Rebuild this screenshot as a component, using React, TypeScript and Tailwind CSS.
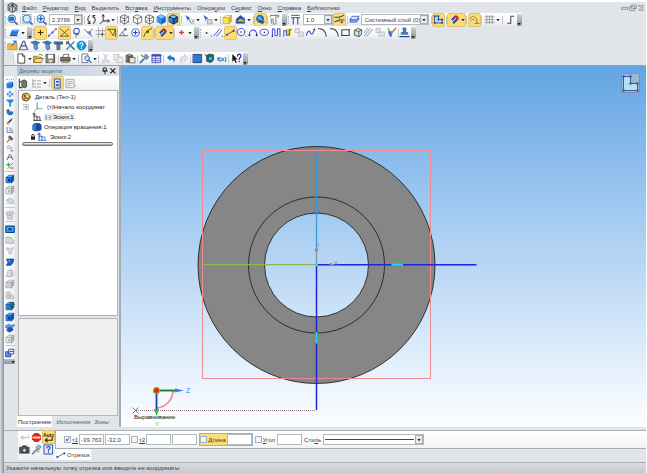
import { useState } from 'react';
import type { ReactNode } from 'react';
import clsx from 'clsx';

function Svg({ children, size = 'size-[11px]' }: { children: ReactNode; size?: string }) {
	return (
		<svg viewBox="0 0 12 12" className={clsx('shrink-0', size)} fill="none" strokeLinecap="round" strokeLinejoin="round" aria-hidden="true">
			{children}
		</svg>
	);
}

const Cube = ({ top = '#5db4f5', left = '#1c7fe0', right = '#0a48b0', stroke = '#0b3f93' }) => (
	<g stroke={stroke} strokeWidth="0.7">
		<path d="M1.5 4 4.5 1.5H10.5L8 4Z" fill={top} />
		<path d="M1.5 4H8V10.5H1.5Z" fill={left} />
		<path d="M8 4 10.5 1.5V8L8 10.5Z" fill={right} />
	</g>
);

// shaded cube seen from the corner, as on the display mode buttons
const IsoCube = ({ stroke }: { stroke: string }) => (
	<g stroke={stroke} strokeWidth="0.9">
		<path d="M6 1 10.5 3.2 6 5.4 1.5 3.2Z" fill="#7cc6fa" />
		<path d="M1.5 3.2 6 5.4V11L1.5 8.6Z" fill="#2a8ff0" />
		<path d="M6 5.4 10.5 3.2V8.6L6 11Z" fill="#1263c4" />
	</g>
);

const WireCube = ({ inner = false }) => (
	<g stroke="#555" strokeWidth="0.8">
		<path d="M6 1 10.5 3.2V8.6L6 11 1.5 8.6V3.2Z" fill="#f6f6f6" />
		<path d="M1.5 3.2 6 5.4 10.5 3.2M6 5.4V11" />
		{inner && <path d="M6 1V6.5L1.5 8.6M6 6.5 10.5 8.6" strokeWidth="0.6" />}
	</g>
);

const Lens = ({ children }: { children?: ReactNode }) => (
	<g>
		<path d="M8 8.2 11 11" stroke="#5b4fa0" strokeWidth="1.7" />
		<circle cx="5.2" cy="5.2" r="4" fill="#d5ecfb" stroke="#3479c4" strokeWidth="1.1" />
		{children}
	</g>
);

const GrayCube = () => <Cube top="#e2e2e2" left="#cfcfcf" right="#b0b0b0" stroke="#999" />;

const icons: Record<string, ReactNode> = {
	app: <g stroke="#4a4a4a"><path d="M6 1 10.8 3.5V8.8L6 11.2 1.2 8.8V3.5Z" fill="#c9ccd0" strokeWidth="1" /><path d="M1.4 3.6 6 6 10.6 3.6M6 6V11" strokeWidth="0.8" /><circle cx="6" cy="3.6" r="1.2" fill="#333" /><path d="M3 6V8M9 6V8" strokeWidth="1.2" /></g>,
	zoomFit: <Lens><path d="M3.2 3.5H7.2V7H3.2Z" fill="#3479c4" stroke="#174a86" strokeWidth="0.8" /></Lens>,
	zoomRect: <Lens><path d="M0.5 0.5H10V10H0.5Z" stroke="#6f8ea9" strokeWidth="0.7" strokeDasharray="1 1.2" /></Lens>,
	zoomIn: <Lens><path d="M5.2 2.8V7.6M2.8 5.2H7.6" stroke="#1757a6" strokeWidth="1.2" /></Lens>,
	rotate: <g stroke="#333" strokeWidth="1.1"><path d="M4 1.8C1.5 3 1.2 7.5 3.8 9.8M8 10.2C10.5 9 10.8 4.5 8.2 2.2" /><path d="M2.2 10.4 4.4 10.3 4.2 8M9.8 1.6 7.6 1.7 7.8 4" /></g>,
	axes: <g strokeWidth="1.1"><path d="M4.5 1V7.5H11" stroke="#444" /><path d="M4.5 7.5 1.2 10.5" stroke="#2e63c9" /><path d="M3.3 2.4 4.5 0.8 5.7 2.4M9.6 6.3 11.2 7.5 9.6 8.7" stroke="#444" /></g>,
	cubeWireAll: <WireCube inner />,
	cubeWire: <WireCube />,
	cubeShaded: <IsoCube stroke="#2a86e2" />,
	cubeBlue: <Cube stroke="#2a86e2" />,
	cubeEdge: <IsoCube stroke="#13294d" />,
	pointDim: <g><path d="M1.5 1 7 4.5 4.8 5.2 4.2 7.5Z" fill="#2763bd" /><path d="M4.8 5.2 8 10" stroke="#2763bd" /><path d="M8.3 5.5 10 7.6V10.5M11.4 6 10 7.6" stroke="#888" strokeWidth="0.8" /></g>,
	pointPart: <g><path d="M1.5 1 7 4.5 4.8 5.2 4.2 7.5Z" fill="#2763bd" /><path d="M6 6H11V10.8H6Z" fill="#d3d8de" stroke="#888" strokeWidth="0.7" /></g>,
	yellowCube: <Cube top="#fdf6a5" left="#f5e650" right="#d7c02b" stroke="#b5a132" />,
	paint: <g><path d="M1.5 5.5 6 1.5 10.5 5.2V10H1.5Z" fill="#1d55a5" stroke="#173a70" strokeWidth="0.6" /><path d="M3 8.5C4 4.5 8 4 10.6 8.5Z" fill="#f4a62a" /></g>,
	sphereSel: <g><circle cx="5.5" cy="5.2" r="3.8" fill="#2384e0" stroke="#15467e" strokeWidth="0.8" /><path d="M5 6.5 10.8 8.2 8.5 10.8 3.5 9Z" fill="#1e58a8" /><path d="M3.5 3.5 7 6" stroke="#bfe4ff" /></g>,
	frameGray: <path d="M1.5 3.2V1.5H10.5V3.2H7.5V10.8H4.5V5.5H2.5V10" stroke="#8a8a8a" strokeWidth="1.1" />,
	step: <g strokeWidth="1.1" stroke="#2d3cc9"><path d="M3.5 4V11M8.5 4V11M1.5 4H5.5M6.5 4H10.5" /><path d="M2 1.5H10" stroke="#555" strokeDasharray="1.2 1.4" /></g>,
	snapLines: <g strokeWidth="1.1"><path d="M1 3.5H6L10.5 1.5M1 8.5 6 6.5H11" stroke="#3b4458" /><path d="M6 3V8" stroke="#a8752a" /><circle cx="8.5" cy="9" r="1.2" fill="#3b4458" /></g>,
	layer: <g stroke="#2d4fd0" strokeWidth="0.9"><path d="M1 8.5 3.5 5H11L8.5 8.5Z" fill="#8cacf4" /><path d="M1 6 3.5 2.5H11L8.5 6Z" fill="#dce6ff" /></g>,
	sketch: <g stroke="#26419a" strokeWidth="0.9"><path d="M2 2.3H6V6H10V9.8H2Z" fill="#b5dbe3" /><path d="M1.3 1.5H2.7V2.9H1.3ZM5.3 1.5H6.7V2.9H5.3ZM9.3 5.3H10.7V6.7H9.3ZM1.3 9.2H2.7V10.6H1.3ZM9.3 9.2H10.7V10.6H9.3ZM5.3 5.3H6.7V6.7H5.3Z" fill="#26419a" strokeWidth="0.3" /></g>,
	magnet: <g strokeLinecap="butt"><path d="M2 8 6.2 3.6C8 2 10.3 4.2 8.6 6L4.6 10.2" stroke="#1d4dc4" strokeWidth="2.3" /><path d="M6.2 3.6C8 2 10.3 4.2 8.6 6" stroke="#e32919" strokeWidth="2.3" /><path d="M2 8 3.2 6.8" stroke="#fff" strokeWidth="2.3" /></g>,
	param: <g stroke="#8d7a55" strokeWidth="1"><path d="M1.5 5C2.5 1.5 6 1.5 7 5M2 7.5C3.5 5 5 5.5 5.5 7M8.5 5.5V10M6.5 10.3H11" /></g>,
	grid: <path d="M1 3H11M1 6H11M1 9H11M3 1.5V10.5M6 1.5V10.5M9 1.5V10.5" stroke="#888" strokeWidth="0.8" />,
	ortho: <path d="M3 10H6.3V2.5H9.5" stroke="#444" strokeWidth="1.1" />,
	sheet: <g><path d="M1 8.5 3.5 3H11L9 8.5Z" fill="#1d75d8" /><path d="M1 8.5H9V10H1Z" fill="#0f4eaa" /><path d="M4.5 4.2H9" stroke="#8fcbff" /></g>,
	plus: <g><path d="M6 3.5V8.5M3.5 6H8.5" stroke="#3a2c12" strokeWidth="1.2" /></g>,
	mid: <g><path d="M1.5 10 10 2" stroke="#555" strokeWidth="0.9" /><path d="M5 5H7V7H5Z" fill="#2d49d2" /><circle cx="2" cy="9.5" r="1" fill="#555" /><circle cx="9.8" cy="2.3" r="1" fill="#555" /></g>,
	cross: <g><path d="M1.5 2 10.5 10M1.5 10 10.5 2M1.5 10H10" stroke="#5a5022" strokeWidth="0.9" /></g>,
	tangent: <g><circle cx="6" cy="4.3" r="3" stroke="#2d49d2" strokeWidth="1.1" /><path d="M3 7 8.5 8.5M5.5 7.5V11" stroke="#555" strokeWidth="0.9" /></g>,
	normal: <g stroke="#666" strokeWidth="1"><path d="M1.5 2.5 6 7 10.5 2M6 7 10 10" /><path d="M5 5.5H8V8" stroke="#2d49d2" /></g>,
	gridSnap: <g><path d="M1 4H11M1 8H11M4 1V11M8 1V11" stroke="#777" strokeWidth="0.8" strokeDasharray="1.2 1" /><circle cx="8" cy="8" r="1.1" fill="#333" /></g>,
	align: <g><path d="M1.5 2.5H10.5V10.5" stroke="#54491f" strokeWidth="1" strokeDasharray="1.5 0.8" /><path d="M3.5 3 8 9.5 10 3" stroke="#54491f" strokeWidth="0.9" /></g>,
	angle: <g stroke="#555" strokeWidth="0.9"><path d="M1.5 9.5H10.5M1.5 9.5 7.5 2.5" /><path d="M6.5 9.5C6.5 7.5 6 6.5 4.8 5.8" stroke="#2d49d2" /><circle cx="8" cy="2.5" r="0.9" fill="#555" /></g>,
	center: <g><circle cx="6" cy="6" r="4.2" stroke="#3a63d6" strokeWidth="1" /><path d="M6 4V8M4 6H8" stroke="#2b3fae" strokeWidth="1.1" /></g>,
	onCurve: <g stroke="#54491f"><path d="M2 10.5C3 6 6 3 10.5 1.8" strokeWidth="1" /><circle cx="6" cy="5.2" r="1.1" fill="#54491f" /></g>,
	redPoint: <path d="M6 4V8M4 6H8" stroke="#e33224" strokeWidth="1.4" />,
	dot: <g><circle cx="5" cy="6.5" r="1" fill="#333" /><path d="M9.5 9.5H11V11Z" fill="#333" /></g>,
	parallel: <g><path d="M1 9.5 7 2.5M4 10 9.5 3.5" stroke="#3a46d8" strokeWidth="1" /><path d="M9.5 9.5H11V11Z" fill="#333" /></g>,
	segment: <g><path d="M2 8.5 9.5 4" stroke="#5c5420" strokeWidth="1" /><circle cx="2" cy="8.5" r="1.2" fill="#2d49d2" /><circle cx="9.5" cy="4" r="1.2" fill="#2d49d2" /></g>,
	circle: <g><circle cx="5.5" cy="5.5" r="4" stroke="#3a46d8" strokeWidth="1" /><circle cx="5.5" cy="5.5" r="0.9" fill="#333" /><path d="M9.8 9.5H11.2V11Z" fill="#333" /></g>,
	arc: <g><path d="M1.5 9C1.5 1.5 9.5 1.5 9.5 9" stroke="#3a46d8" strokeWidth="1.1" /><circle cx="1.6" cy="9" r="1" fill="#222" /><circle cx="9.4" cy="9" r="1" fill="#222" /></g>,
	ellipse: <g><ellipse cx="5.8" cy="5.8" rx="4.6" ry="3.4" stroke="#3a46d8" strokeWidth="1" /><circle cx="5.8" cy="5.8" r="0.9" fill="#333" /></g>,
	polyline: <g><path d="M1.5 10V3C1.5 1.5 4.2 1.5 4.2 3V8.5C4.2 10 7 10 7 8.5V2H9.8V10" stroke="#3a46d8" strokeWidth="1.1" /><circle cx="1.5" cy="10" r="0.8" fill="#222" /></g>,
	spline: <g><path d="M4 1.5H10V9H4Z" fill="#f2e14a" /><path d="M2 10V4H5V9H8V3H10.3" stroke="#2f3aa8" strokeWidth="1" /></g>,
	copyGray: <g stroke="#bcbcbc" strokeWidth="0.9" fill="#e4e4e4"><path d="M1.5 1.5H6V6H1.5Z" /><path d="M5 5.5H10.5V10H5Z" /></g>,
	curve: <g><path d="M1.5 9C3 3 5 4 6 6.5 7.5 9 9 7 10.3 2.5" stroke="#3a46d8" strokeWidth="1.2" /><circle cx="10.3" cy="2.5" r="1" fill="#333" /></g>,
	fillet: <path d="M1.5 1.8H3.5C7.5 2.5 9.5 5 10 10" stroke="#333" strokeWidth="1.1" />,
	rect: <g><path d="M2 3H10V9.2H2Z" stroke="#3b4372" strokeWidth="1.2" /><circle cx="2" cy="9.2" r="0.9" fill="#2d49d2" /><circle cx="10" cy="3" r="0.9" fill="#2d49d2" /></g>,
	project: <g><path d="M3 3.5 6 1.5 10.5 3V8L7.5 10.5 3 9Z" fill="#cfe6cf" stroke="#2b4e46" strokeWidth="0.9" /><path d="M3 3.5 7.5 5V10.5M7.5 5 10.5 3" stroke="#2b4e46" strokeWidth="0.8" /></g>,
	hatch: <path d="M1.5 9.5 8 1.5M4 10 10.5 2.5M1.5 6 5 1.5" stroke="#7079c7" strokeWidth="0.9" />,
	brush: <g><path d="M2 4.5H7.5L6 10.5H4Z" fill="#3a77d8" /><path d="M6.2 6.5 10.5 1.5" stroke="#c8892a" strokeWidth="1.7" /><path d="M2.2 1.5 4 4.5" stroke="#58a93b" strokeWidth="1.2" /></g>,
	copyProps: <g><path d="M1.5 10.5 5.5 6.5" stroke="#4a78c8" strokeWidth="2" /><path d="M4.8 3.8 8.2 7.3 10.8 4 8 1.3Z" fill="#7d93c4" stroke="#40507a" strokeWidth="0.6" /><path d="M2.5 2 4 4" stroke="#58a93b" strokeWidth="1.4" /></g>,
	stamp: <g><path d="M4.5 1H7.5V6H9.5V8H2.5V6H4.5Z" fill="#3b7fd4" stroke="#1c4a8d" strokeWidth="0.6" /><path d="M1 10.5H11" stroke="#1c4a8d" strokeWidth="1.3" /></g>,
	folderUp: <g><path d="M1 4H5L6 5H11V10.5H1Z" fill="#f2b348" stroke="#b77914" strokeWidth="0.6" /><path d="M5 6.5 9.5 1.5M7 1.2H10V4" stroke="#2f7ed0" strokeWidth="1.3" /></g>,
	letterA: <g><path d="M2 9.5 5.5 1.5H7L10 9.5M3.5 6.5H8.5" stroke="#3f5c7a" strokeWidth="1.3" /><path d="M1 10.5H11" stroke="#c04a3a" /></g>,
	bolt: <g><path d="M1 2.5 6 1 10.5 3 6.5 5Z" fill="#2a80b8" stroke="#1d3f63" strokeWidth="0.6" /><path d="M4.5 4.5 8 4.8 8.5 9.5 6 11 4.5 9Z" fill="#5d9cc8" stroke="#1d3f63" strokeWidth="0.6" /></g>,
	screw: <g><path d="M1.5 2H10.5V4.5H1.5Z" fill="#2a80b8" stroke="#1d3f63" strokeWidth="0.6" /><path d="M4.5 4.5H7.5V10.5H4.5Z" fill="#66788a" stroke="#1d3f63" strokeWidth="0.6" /></g>,
	tools: <g strokeWidth="1.5"><path d="M2 2 10 10" stroke="#4a5b6c" /><path d="M10 2 2 10" stroke="#2390c8" /><path d="M1.5 4 4 1.5" stroke="#4a5b6c" /></g>,
	info: <g><circle cx="6" cy="6" r="4.9" fill="#129bd4" stroke="#0d6d9b" strokeWidth="0.6" /><path d="M4.3 4.5C4.5 2.5 7.7 2.6 7.6 4.5 7.5 5.8 6 5.8 6 7.2" stroke="#fff" strokeWidth="1.1" /><circle cx="6" cy="9" r="0.7" fill="#fff" /></g>,
	newDoc: <path d="M2.5 1H7L9.5 3.5V11H2.5ZM7 1V3.5H9.5" fill="#fff" stroke="#333" strokeWidth="0.9" />,
	open: <g><path d="M1 3.5H4.5L5.5 4.5H9V10H1Z" fill="#e7b83d" stroke="#6d5613" strokeWidth="0.7" /><path d="M1 10 3.2 6H11.3L9 10Z" fill="#fbe07c" stroke="#6d5613" strokeWidth="0.7" /><path d="M6.5 2C8 0.8 9.5 1.2 10.2 2.8" stroke="#2f8a36" /></g>,
	save: <g><path d="M1.5 1.5H10.5V10.5H1.5Z" fill="#8a8560" stroke="#333" strokeWidth="0.8" /><path d="M3.3 1.8H8.7V6H3.3Z" fill="#fff" /><path d="M4 7.5H8V10.3H4Z" fill="#d4d8c8" /></g>,
	print: <g><path d="M3 4.5 4 1.5H9.5L9 4.5" fill="#fff" stroke="#444" strokeWidth="0.8" /><path d="M1 4.8H11V8.8H1Z" fill="#77725f" stroke="#333" strokeWidth="0.7" /><path d="M2.5 8.8H9.5V10.5H2.5Z" fill="#e5c35b" stroke="#444" strokeWidth="0.5" /></g>,
	preview: <g><path d="M1.5 1H7.5V10.5H1.5Z" fill="#fff" stroke="#555" strokeWidth="0.8" /><circle cx="6.7" cy="5.7" r="2.6" fill="#cfe5f8" stroke="#3868a8" /><path d="M8.5 7.8 11 10.5" stroke="#3868a8" strokeWidth="1.4" /></g>,
	cut: <g stroke="#b9bcc0" strokeWidth="1"><path d="M4 1 7.5 8M8 1 4.5 8" /><circle cx="3.7" cy="9.3" r="1.3" /><circle cx="8.3" cy="9.3" r="1.3" /></g>,
	copy: <g fill="#eceef0" stroke="#b0b4b8" strokeWidth="0.8"><path d="M1.5 1.5H6.5V7.5H1.5Z" /><path d="M5 4.5H10.5V10.5H5Z" /></g>,
	paste: <g><path d="M1.5 2.5H8.5V10H1.5Z" fill="#7d6238" stroke="#3f321d" strokeWidth="0.7" /><path d="M3.5 1.2H6.5V3.3H3.5Z" fill="#bbb" stroke="#444" strokeWidth="0.5" /><path d="M5 5H11V10.8H5Z" fill="#e6e9ee" stroke="#444" strokeWidth="0.7" /></g>,
	props: <g><path d="M1.5 1.5H10.5V10.5H1.5Z" fill="#dfe3fa" stroke="#3c48a8" strokeWidth="0.9" /><path d="M1.5 2.8H10.5" stroke="#3c48a8" strokeWidth="2" /><path d="M1.5 6H10.5M1.5 8.2H10.5M5 3V10.5" stroke="#3c48a8" strokeWidth="0.7" /></g>,
	undo: <path d="M1 5 5 1.5V3.8C9.5 3.5 11.5 7 8 10.8 8.8 8 8 6.6 5 6.7V8.8Z" fill="#1f6fd6" />,
	redo: <path d="M11 5 7 1.5V3.8C2.5 3.5 0.5 7 4 10.8 3.2 8 4 6.6 7 6.7V8.8Z" fill="#e2e5e8" stroke="#b4b8bc" strokeWidth="0.6" />,
	book: <g><path d="M1.5 1.5H10.5V10.5H1.5Z" fill="#1d63ce" stroke="#173d84" strokeWidth="0.9" /><path d="M2.5 3.5H9.5M2.5 6H9.5M2.5 8.5H9.5" stroke="#55a5f0" strokeWidth="0.8" /></g>,
	library: <g><path d="M3 2.5 6 1 10.5 2V7.5L7.5 10.5 3 9Z" fill="#16686e" stroke="#103c53" strokeWidth="0.7" /><path d="M5.5 4.5H8.5V7.5H5.5Z" fill="#49c2b8" /><path d="M1 1.5 3.5 4" stroke="#222" /></g>,
	whatIs: <g><path d="M1.5 1V9.5L3.5 7.6 5 11 6.2 10.4 4.8 7.2H7.2Z" fill="#111" /><path d="M7 3.3C7 0.6 11 0.8 10.9 3.2 10.8 5 9 5 9 7" stroke="#2b35ad" strokeWidth="1.4" /><circle cx="9" cy="9.3" r="0.9" fill="#2b35ad" /></g>,
	surf: <g fill="#3586de"><path d="M6 1 8 3.3 6 5.5 4 3.3ZM2.8 4 5 6.2 2.8 8.5 0.8 6.2ZM9.2 4 11.2 6.2 9.2 8.5 7 6.2ZM6 7 8 9 6 11.3 4 9Z" /></g>,
	funnel: <g><path d="M1 1.5 5.5 6.5V11H7V6.5L11 1.5Z" fill="#2288da" stroke="#2288da" /><path d="M8 1.5 10 4" stroke="#d44" strokeWidth="1.4" /></g>,
	cyl: <g><path d="M1.5 4C2 1 5 1.5 5 4.5 6 7 9 4 10.5 6.5 11 10 8 11 5.5 10.5 2 10 0.8 7 1.5 4Z" fill="#2271c2" stroke="#184b83" strokeWidth="0.6" /></g>,
	edge: <g><path d="M2 10 10 2" stroke="#666" /><path d="M4.5 7.5 8 4" stroke="#333" strokeWidth="2.2" /><path d="M2 8V10.3H4.4" stroke="#555" /></g>,
	dims: <g><path d="M1.5 2V9.5H10.5" stroke="#3b4fb5" strokeWidth="1.1" /><path d="M4.5 3H7.5L5 7H8M9 4V9" stroke="#777" strokeWidth="0.9" /></g>,
	hammer: <g><path d="M2 10.5 6 5.5" stroke="#a86d26" strokeWidth="1.8" /><path d="M3.5 3 6 1.2 10.5 5.5 8.5 8Z" fill="#6b5640" stroke="#3e3226" strokeWidth="0.6" /></g>,
	compass: <path d="M1.5 10 5.2 2.5H6.8L10.5 10M3 7.5C5 5.8 7 5.8 9 7.5" stroke="#4b4f55" strokeWidth="1.2" />,
	plusMinus: <g strokeWidth="1.5"><path d="M3.5 1.5V6.5M1 4H6" stroke="#2b9a3d" /><path d="M10.5 1.5 2 10.5" stroke="#444" strokeWidth="0.8" /><path d="M6.5 9H11" stroke="#df3324" /></g>,
	extrude: <g><Cube /><path d="M3.5 6H6.5V9H3.5Z" fill="#0c3a92" /></g>,
	cutOut: <g><Cube top="#e2e2e2" left="#eee" right="#b5b5b5" stroke="#8d8d8d" /><path d="M3.5 5.8H6.5V9H3.5Z" fill="#bababa" /></g>,
	shapesGray: <g fill="#d2d2d2" stroke="#aaa" strokeWidth="0.8"><circle cx="4" cy="4.5" r="2.7" /><circle cx="8" cy="3.5" r="2.3" /><path d="M3.5 6.5H9V11H3.5Z" /></g>,
	fixGray: <g stroke="#aaa" strokeWidth="0.8" fill="#d6d6d6"><path d="M1.5 5 6 2.5 10.5 5V9H6L4 6.5Z" /><path d="M1.5 8.5H5" /></g>,
	frameBlue: <g><path d="M1 2.5H11V10H1Z" fill="#2db8e8" stroke="#0d3f9c" strokeWidth="1.5" /><path d="M4.2 4.8H7.8V7.8H4.2Z" fill="#0e3b8d" /></g>,
	roundGray: <path d="M1.5 2.5H5C9 3 10.5 6 10.5 10H1.5Z" fill="#d6d6d6" stroke="#aaa" strokeWidth="0.9" />,
	holeGray: <path d="M1.5 2.5H4.5L5 9H7.2L7.7 2.5H10.5M1.5 4.5H3.5" stroke="#aaa" strokeWidth="1.1" />,
	sheetBlue: <g><path d="M2 2.5H10.5L9.5 7 7 10H1.5L3.5 7Z" fill="#1a5fd0" stroke="#0c3382" strokeWidth="0.8" /><path d="M5 3.5V6" stroke="#7fc2ff" /></g>,
	loftGray: <path d="M1.5 10 4 2.5H8L10.5 8.5 8 10ZM8 2.5 7.5 10" fill="#dedede" stroke="#aaa" strokeWidth="0.9" />,
	boxGray: <GrayCube />,
	ribGray: <g fill="#d2d2d2" stroke="#aaa" strokeWidth="0.8"><path d="M1.5 3 5 2 10.5 8V10.5H1.5Z" /><circle cx="5" cy="7.3" r="1.7" /></g>,
	partGreen: <g><Cube /><circle cx="8.3" cy="4" r="2.6" fill="#2d7d58" stroke="#1c3d4d" strokeWidth="0.7" /></g>,
	mirror: <g><path d="M1 3 5 1.5 8 3 11 1.5V4L7 6 1 5.5Z" fill="#5f9cf2" stroke="#234ea5" strokeWidth="0.6" /><path d="M3 6 8 5.5 10 8 6 11 2.5 9.5Z" fill="#1d54c4" stroke="#14377f" strokeWidth="0.6" /></g>,
	arrayBlue: <g><path d="M1 4.5H7V10.5H1Z" fill="#5a8de6" stroke="#1d3e94" /><path d="M5 1.5H10.5V7H5Z" fill="#e9f0ff" stroke="#1d3e94" /><path d="M6.5 4.2H9" stroke="#333" /></g>,
	enter: <path d="M10.5 4V6H2M4.5 4.2 2 6 4.5 7.8" stroke="#c0c3c6" strokeWidth="1.2" />,
	camera: <g><path d="M1 3.5H3.5L4 2H8L8.5 3.5H11V10H1Z" fill="#4e555b" stroke="#22272b" strokeWidth="0.7" /><circle cx="6" cy="6.8" r="2.2" fill="#cfd9df" stroke="#22272b" strokeWidth="0.8" /></g>,
	torch: <g><path d="M2 10.5 7.2 5" stroke="#7a86b8" strokeWidth="2.2" /><path d="M5.5 3.5 8.5 6.8 11 2.8 9 1Z" fill="#82b7f0" stroke="#476" strokeWidth="0.6" /><path d="M6 7.5 8.5 8.5" stroke="#c5ad3a" strokeWidth="1.6" /></g>,
	helpDoc: <g><path d="M1.5 1H10.5V11H1.5Z" fill="#dfe9fb" stroke="#25479a" strokeWidth="1" /><path d="M4.2 4.3C4.2 2.3 7.8 2.4 7.7 4.4 7.6 5.7 6 5.7 6 7" stroke="#1f3a9a" strokeWidth="1.1" /><circle cx="6" cy="9" r="0.7" fill="#1f3a9a" /></g>,
	treeRoot: <g stroke="#3a3a3a"><path d="M2.5 1V10.5H5M2.5 4H5" strokeWidth="1.1" /><path d="M5.5 3 8 2 10.5 3.5V9.5L8 10.8 5.5 9.5Z" fill="#6d7a5a" strokeWidth="0.8" /></g>,
	treeGray: <g stroke="#a0a4a8" strokeWidth="1"><path d="M2 1.5V10H5M2 3H5M2 6.5H5M7 3H10.5M7 6.5H10.5M7 10H10.5" /></g>,
	treeBlue: <g><path d="M3 1H9V11H3Z" fill="#cfe1fb" stroke="#29509f" strokeWidth="1" /><path d="M4.5 3.2H7.5V5H4.5ZM4.5 6.8H7.5V8.6H4.5Z" fill="#29509f" /></g>,
	treeList: <g stroke="#a0a4a8" strokeWidth="0.9"><path d="M1.5 1.5H10V10.5H1.5Z" fill="#f0f0f0" /><path d="M3 4H8M3 6H8M3 8H6M10 7 11.3 9" /></g>,
	gear: <g><circle cx="6" cy="6" r="4.8" fill="#e4b64a" stroke="#5e471b" strokeWidth="1.1" /><circle cx="4.5" cy="4.8" r="1.2" fill="#5e471b" /><circle cx="7.8" cy="5.2" r="1.1" fill="#fff2c4" /><path d="M3.5 8.3 6.5 7 9 8.5" stroke="#5e471b" strokeWidth="1.2" /></g>,
	origin: <g strokeWidth="1"><path d="M5 1V8" stroke="#3b5fd8" /><path d="M5 8H11" stroke="#3bb067" /><path d="M5 8 1.5 11" stroke="#e0655a" /></g>,
	sketchDark: <g stroke="#3c3c3c" strokeWidth="1.1"><path d="M2.5 1V10.5M1 2.5H4M2.5 5H6V10.5M2.5 10H11M6 6H9.5V10" /></g>,
	sketchBlue: <g strokeWidth="1.1"><path d="M2.5 1V10.5M1 2.5H4M2.5 5H6V10.5" stroke="#2f49a8" /><path d="M2.5 10H11M6 6H9.5V10" stroke="#3a92d8" /></g>,
	revolve: <g stroke="#113c7a" strokeWidth="0.7"><path d="M1 3.5C2 1.5 5 1 6 2V10.5C4 11 2 10.5 1 9.5Z" fill="#2580d8" /><path d="M6 2C8 1 10 2 11 3.5V9C9.5 10.5 8 10.5 6 10.5Z" fill="#0f4fa2" /></g>,
};

function Tool({ icon, label, on = false, menu = false }: { icon: string; label: string; on?: boolean; menu?: boolean }) {
	const [active, setActive] = useState(on);
	return (
		<button
			type="button"
			title={label}
			aria-label={label}
			onClick={() => on && setActive(!active)}
			className={clsx(
				'flex h-3 shrink-0 items-center justify-center gap-px rounded-[1px]',
				menu ? 'w-[17px]' : 'w-[11px]',
				active ? 'bg-[#fddc74] outline outline-[#e3c271]' : 'hover:bg-[#fdeeb5]'
			)}
		>
			<Svg>{icons[icon]}</Svg>
			{menu && <Caret />}
		</button>
	);
}

const Caret = () => (
	<svg viewBox="0 0 4 4" className="size-1 shrink-0" aria-hidden="true">
		<path d="M0.3 1H3.7L2 3.2Z" fill="#222" />
	</svg>
);

const Sep = () => <span className="h-2 w-px shrink-0 bg-[#c3c8cd]" />;

function Bar({ label, className, children }: { label: string; className: string; children: ReactNode }) {
	return (
		<div
			role="toolbar"
			aria-label={label}
			className={clsx('flex h-[13px] shrink-0 items-center justify-between rounded-xs bg-linear-to-b from-white via-[#f8f9fa] to-[#e6e9ed]', className)}
		>
			<span className="h-2 w-0 shrink-0 border-l border-dotted border-[#a9afb5]" />
			{children}
			<span className="flex h-3 w-[5px] shrink-0 items-end justify-center rounded-r-xs bg-linear-to-b from-[#cdd1d5] to-[#8b9197]">
				<Caret />
			</span>
		</div>
	);
}

function Combo({ label, value, className }: { label: string; value: string; className: string }) {
	return (
		<span className={clsx('flex h-[11px] shrink-0 items-center border border-[#b4b9be] bg-white', className)}>
			<select aria-label={label} className="h-full min-w-0 flex-1 appearance-none bg-transparent pl-[2px] outline-none">
				<option>{value}</option>
			</select>
			<span className="flex h-full w-2 shrink-0 items-center justify-center border border-[#a7acb1] bg-[#e8eaec]">
				<Caret />
			</span>
		</span>
	);
}

const menus = ['Файл', 'Редактор', 'Вид', 'Выделить', 'Вставка', 'Инструменты', 'Операции', 'Сервис', 'Окно', 'Справка', 'Библиотеки'];
// position of the underlined access letter in each menu title
const accessKeys = [0, 0, 0, 2, 3, 0, 5, 1, 0, 0, 0];

const snaps = [
	['plus', 'Ближайшая точка', true], ['mid', 'Середина'], ['cross', 'Пересечение', true], ['tangent', 'Касание'],
	['normal', 'Нормаль'], ['gridSnap', 'По сетке'], ['align', 'Выравнивание', true], ['angle', 'Угловая привязка'],
	['center', 'Центр'], ['onCurve', 'Точка на кривой', true],
] as [string, string, boolean?][];

const geometry = [
	['dot', 'Точка'], ['parallel', 'Вспомогательная прямая'], ['segment', 'Отрезок', true], ['circle', 'Окружность'],
	['arc', 'Дуга'], ['ellipse', 'Эллипс'], ['polyline', 'Непрерывный ввод'], ['spline', 'Линия'], ['copyGray', 'Контур'],
	['curve', 'Сплайн'], ['fillet', 'Фаска'], ['fillet', 'Скругление'], ['rect', 'Прямоугольник'],
	['project', 'Спроецировать объект'], ['hatch', 'Штриховка'], ['copyGray', 'Эквидистанта'], ['brush', 'Свойства'],
] as [string, string, boolean?][];

const panels = ['cubeBlue', 'surf', 'funnel', 'cyl', 'edge', 'dims', 'hammer', 'param', 'compass', 'plusMinus'];
const operations = [
	['extrude', 'cutOut', 'fixGray'],
	['shapesGray'],
	['frameBlue', 'roundGray', 'holeGray', 'sheetBlue', 'loftGray', 'boxGray', 'ribGray', 'partGreen', 'extrude', 'mirror', 'cutOut'],
	['arrayBlue'],
];

function MenuBar() {
	return (
		<nav className="flex h-[13px] items-center border-t-2 border-white pr-px pl-[3px]">
			<Svg>{icons.app}</Svg>
			<div className="ml-1 flex flex-1 gap-[6px]">
				{menus.map((m, i) => (
					<button key={m} type="button" className="whitespace-nowrap hover:bg-[#fdeeb5]">
						{m.slice(0, accessKeys[i])}
						<u>{m[accessKeys[i]]}</u>
						{m.slice(accessKeys[i] + 1)}
					</button>
				))}
			</div>
			<button type="button" aria-label="Свернуть"><Svg size="size-2"><path d="M1.5 5H10.5V8H1.5Z" stroke="#777" /></Svg></button>
			<button type="button" aria-label="Восстановить"><Svg size="size-2"><path d="M4 1.5H11V7H4ZM1.5 4H8.5V10H1.5Z" fill="#e1e5e9" stroke="#777" /></Svg></button>
			<button type="button" aria-label="Закрыть"><Svg size="size-2"><path d="M3 2.5H10L7.5 6 10 9.5H3L5.5 6Z" stroke="#777" /></Svg></button>
		</nav>
	);
}

function Toolbars() {
	return (
		<div className="border-b border-[#9aa2a9] pl-px">
			<div className="flex gap-px">
				<Bar label="Вид" className="w-[282px]">
					<Tool icon="zoomFit" label="Показать все" />
					<Sep />
					<Tool icon="zoomRect" label="Увеличить рамкой" />
					<Sep />
					<Tool icon="zoomIn" label="Масштаб" />
					<Combo label="Масштаб" value="2.3766" className="w-[34px]" />
					<Sep />
					<Tool icon="rotate" label="Повернуть" />
					<Tool icon="axes" label="Ориентация" menu />
					<Sep />
					<Tool icon="cubeWireAll" label="Каркас" />
					<Tool icon="cubeWire" label="Без невидимых линий" />
					<Tool icon="cubeWireAll" label="Невидимые линии тонкие" />
					<Tool icon="cubeShaded" label="Полутоновое" />
					<Tool icon="cubeEdge" label="Полутоновое с каркасом" on />
					<Sep />
					<Tool icon="pointDim" label="Размеры" menu />
					<Tool icon="pointPart" label="Скрыть" menu />
					<Sep />
					<Tool icon="yellowCube" label="Прозрачность" />
					<Tool icon="paint" label="Цвет" menu />
					<Sep />
					<Tool icon="sphereSel" label="Упрощенное" on />
					<Sep />
					<Tool icon="frameGray" label="Разнести" />
				</Bar>
				<Bar label="Текущее состояние" className="w-[234px]">
					<Tool icon="step" label="Шаг курсора" />
					<Combo label="Шаг курсора" value="1.0" className="w-[30px]" />
					<Tool icon="snapLines" label="Шаг" on />
					<Sep />
					<Tool icon="layer" label="Слои" />
					<Combo label="Слой" value="Системный слой (0)" className="w-[68px]" />
					<Sep />
					<Tool icon="sketch" label="Эскиз" on />
					<Sep />
					<Tool icon="magnet" label="Привязки" on menu />
					<Sep />
					<Tool icon="param" label="Параметрический режим" on />
					<Sep />
					<Tool icon="grid" label="Сетка" menu />
					<Sep />
					<Tool icon="ortho" label="Ортогональное черчение" />
				</Bar>
			</div>
			<div className="flex gap-px">
				<Bar label="Плоскости" className="w-[27px]">
					<Tool icon="sheet" label="Плоскость" menu />
				</Bar>
				<Bar label="Глобальные привязки" className="w-[166px]">
					{snaps.map(([icon, label, on]) => <Tool key={label} icon={icon} label={label} on={on} />)}
					<Sep />
					<Tool icon="magnet" label="Запретить привязки" on menu />
					<Sep />
					<Tool icon="redPoint" label="Локальная привязка" menu />
				</Bar>
				<Bar label="Геометрия" className="w-[216px]">
					{geometry.map(([icon, label, on]) => <Tool key={label} icon={icon} label={label} on={on} />)}
					<Sep />
					<Tool icon="stamp" label="Операция" />
				</Bar>
			</div>
			<Bar label="Библиотеки" className="w-[88px]">
				<Tool icon="folderUp" label="Открыть библиотеку" />
				<Tool icon="letterA" label="Обозначения" />
				<Tool icon="bolt" label="Болт" />
				<Tool icon="bolt" label="Гайка" />
				<Tool icon="screw" label="Винт" />
				<Tool icon="tools" label="Настройка" />
				<Tool icon="info" label="Справка" />
			</Bar>
			<div className="pl-2">
				<Bar label="Стандартная" className="w-[235px]">
					<Tool icon="newDoc" label="Создать" menu />
					<Tool icon="open" label="Открыть" />
					<Tool icon="save" label="Сохранить" />
					<Sep />
					<Tool icon="print" label="Печать" menu />
					<Sep />
					<Tool icon="preview" label="Просмотр" menu />
					<Sep />
					<Tool icon="cut" label="Вырезать" />
					<Tool icon="copy" label="Копировать" />
					<Tool icon="paste" label="Вставить" />
					<Sep />
					<Tool icon="copyProps" label="Копировать свойства" />
					<Tool icon="props" label="Свойства" />
					<Sep />
					<Tool icon="undo" label="Отменить" />
					<Tool icon="redo" label="Повторить" />
					<Sep />
					<Tool icon="book" label="Менеджер библиотек" />
					<Tool icon="library" label="Менеджер документа" />
					<button type="button" title="Переменные" className="w-[11px] font-bold text-[#2f3c9e]">f(x)</button>
					<Sep />
					<Tool icon="whatIs" label="Что это такое?" />
				</Bar>
			</div>
		</div>
	);
}

function Rail() {
	return (
		<aside className="flex w-[11px] shrink-0 flex-col pt-[10px]">
			<div className="flex flex-col items-center bg-linear-to-r from-white to-[#eceef2] pt-[3px]">
				<span className="h-0 w-2 border-t border-dotted border-[#a9afb5]" />
				{panels.map((p) => (
					<button key={p} type="button" aria-label={p} className="flex h-[9px] items-center pt-px">
						<Svg size="size-2">{icons[p]}</Svg>
					</button>
				))}
				{operations.map((group, g) => (
					<div key={g} className="mt-px flex flex-col items-center border-t border-[#c3c8cd] pt-px">
						{group.map((p, i) => (
							<button key={i} type="button" aria-label={p} className="flex h-[11px] items-center">
								<Svg size="size-[10px]">{icons[p]}</Svg>
							</button>
						))}
					</div>
				))}
				<span className="mt-px flex h-[5px] w-full items-center justify-end bg-linear-to-b from-[#b9bec3] to-[#8b9197]">
					<Caret />
				</span>
			</div>
		</aside>
	);
}

function TreePanel() {
	return (
		<section className="flex w-[104px] shrink-0 flex-col pl-[2px]">
			<header className="flex h-[10px] items-center bg-linear-to-r from-[#b9c7d6] to-[#dde4eb] px-[2px] text-[#5c6b7b]">
				<h2 className="flex-1">Дерево модели</h2>
				<button type="button" aria-label="Закрепить"><Svg size="size-2"><path d="M4 1.5H8V6H4ZM2.5 6H9.5M6 6V10.5" stroke="#222" strokeWidth="1.4" /></Svg></button>
				<button type="button" aria-label="Закрыть"><Svg size="size-2"><path d="M2.5 2.5 9 9M9 2.5 2.5 9" stroke="#222" strokeWidth="1.7" /></Svg></button>
			</header>
			<div className="flex h-[14px] items-center gap-[2px] bg-linear-to-b from-white to-[#eef0f2]">
				<Tool icon="treeRoot" label="Структура" />
				<Tool icon="treeGray" label="Состав" menu />
				<Sep />
				<Tool icon="treeBlue" label="Отображение структуры" on />
				<Tool icon="treeList" label="Дополнительное окно" />
			</div>
			<ul className="mx-px flex-7 border border-[#aeb4ba] bg-white pt-px text-[#222]">
				<li className="flex h-[10px] items-center gap-1 pl-[2px]"><Svg size="size-[10px]">{icons.gear}</Svg>Деталь (Тел-1)</li>
				<li className="flex h-[10px] items-center gap-1 pl-1">
					<button type="button" aria-label="Развернуть"><Svg size="size-[6px]"><path d="M1 1H11V11H1Z" fill="#fff" stroke="#8a9aaa" /><path d="M3.5 6H8.5M6 3.5V8.5" stroke="#345" /></Svg></button>
					<Svg size="size-[10px]">{icons.origin}</Svg>
					<span className="whitespace-nowrap">(т)Начало координат</span>
				</li>
				<li className="flex h-[10px] items-center gap-[2px] pl-[13px]"><Svg size="size-[10px]">{icons.sketchDark}</Svg><span className="bg-[#ececec] px-px">(-) Эскиз:1</span></li>
				<li className="flex h-[10px] items-center gap-[2px] pl-[13px]"><Svg size="size-[10px]">{icons.revolve}</Svg><span className="whitespace-nowrap">Операция вращения:1</span></li>
				<li className="flex h-[10px] items-center gap-px pl-[11px]">
					<Svg size="size-[6px]"><path d="M2 5H10V11.5H2Z" fill="#222" /><path d="M3.5 5V3C3.5 0 8.5 0 8.5 3V5" stroke="#222" strokeWidth="1.8" /></Svg>
					<Svg size="size-[10px]">{icons.sketchBlue}</Svg>
					<span className="pl-[2px]">Эскиз:2</span>
				</li>
				<li className="mr-1 ml-[3px] h-1 rounded-full border border-[#777] bg-linear-to-b from-white to-[#999]" />
			</ul>
			<div className="mx-px mt-[2px] flex-3 border border-[#b4b9be] bg-[#efefef]" />
			<div role="tablist" className="flex h-[11px] items-center gap-1 text-[#555f69]">
				<button type="button" role="tab" aria-selected="true" className="h-full bg-white px-px text-[#333]">Построение</button>
				<button type="button" role="tab" aria-selected="false">Исполнения</button>
				<button type="button" role="tab" aria-selected="false">Зоны</button>
			</div>
		</section>
	);
}

function Viewport() {
	return (
		<main className="flex min-h-0 flex-1 border-l-2 border-[#a3abb3] bg-linear-to-b from-[#62a5e4] to-[#fdfeff]">
			<svg viewBox="0 0 525 361" className="block h-full w-full" fill="none" role="img" aria-label="Деталь, вид сверху">
				<path fillRule="evenodd" d="M77 199a118.500 118.500 0 1 0 237 0a118.500 118.500 0 1 0 -237 0ZM143.500 199a52 52 0 1 0 104 0a52 52 0 1 0 -104 0Z" fill="#868686" />
				<g stroke="#222" strokeWidth="0.900">
					<circle cx="195.500" cy="199" r="118.500" />
					<circle cx="195.500" cy="199" r="68" />
					<circle cx="195.500" cy="199" r="52" />
				</g>
				<path d="M81.500 84.500H309.500V312.500H81.500Z" stroke="#ef8a90" />
				<path d="M195.500 85V199" stroke="#3598dc" strokeWidth="1.200" />
				<path d="M82 198.700H195" stroke="#8cba50" strokeWidth="1.200" />
				<path d="M195.500 198.700H355.500M195.500 199V344" stroke="#2422dc" strokeWidth="1.500" />
				<path d="M270.500 198.700H282M195.500 266V277.500" stroke="#18dbe4" strokeWidth="2" />
				<path d="M194 197.500H197V200.500H194Z" fill="#18dbe4" />
				<path d="M195.500 197V185M194 185 195.500 181 197 185ZM209 198.700H213M209 197.200 213 198.700 209 200.200Z" stroke="#8d8d95" strokeWidth="0.800" fill="#8d8d95" />
				<text x="195" y="181" fontSize="6" fill="#8d8d95">Y</text>
				<text x="213" y="199" fontSize="6" fill="#8d8d95">X</text>
				<path d="M15 344.500H195" stroke="#9a7777" strokeDasharray="1 1" />
				<path d="M11.500 341.500 17.500 347.500M17.500 341.500 11.500 347.500" stroke="#6d4f4f" strokeWidth="0.800" />
				<path d="M52 325C51.500 334 45 341 36 342" stroke="#ee8d8d" strokeWidth="1.800" />
				<path d="M35.500 324.500H54" stroke="#127a22" strokeWidth="1.800" />
				<path d="M54 322.500 63 324.500 54 326.500Z" fill="#2f80f0" />
				<path d="M35.500 324V343" stroke="#173fb4" strokeWidth="1.800" />
				<path d="M33 343H38L35.500 350Z" fill="#1fc43a" />
				<circle cx="35.500" cy="324.500" r="3" fill="#d8291c" stroke="#c59a1d" strokeWidth="1.200" />
				<text x="65" y="327" fontSize="7" fill="#2f80f0">Z</text>
				<text x="34" y="360" fontSize="6" fill="#1fc43a">Y</text>
				<text x="13" y="353" fontSize="6" fill="#111">Выравнивание</text>
				<path d="M500.500 7.500H518.500V26.500H500.500Z" fill="#9db7d2" stroke="#8392a3" />
				<path d="M502.500 10.500H509.500V17.500H516.500V24.500H502.500Z" fill="#b3e4ec" stroke="#3d57ad" />
				<g fill="#3d57ad">
					<circle cx="502.500" cy="10.500" r="1.300" />
					<circle cx="509.500" cy="10.500" r="1.300" />
					<circle cx="509.500" cy="17.500" r="1.300" />
					<circle cx="516.500" cy="17.500" r="1.300" />
					<circle cx="516.500" cy="24.500" r="1.300" />
					<circle cx="502.500" cy="24.500" r="1.300" />
				</g>
			</svg>
		</main>
	);
}

function Check({ label, letter, children, checked = false }: { label: string; letter: string; children?: string; checked?: boolean }) {
	const [on, setOn] = useState(checked);
	return (
		<label className="flex shrink-0 items-center gap-px" title={label}>
			<span className="grid">
				<input type="checkbox" checked={on} onChange={() => setOn(!on)} className="col-start-1 row-start-1 size-[7px] appearance-none border border-[#a9b4bf] bg-[#f3f5f7]" />
				{on && (
					<svg viewBox="0 0 7 7" className="pointer-events-none col-start-1 row-start-1 size-[7px]" fill="none">
						<path d="M2 3 3 5 5 1.500" stroke="#4454a4" />
					</svg>
				)}
			</span>
			<span><u>{letter}</u>{children}</span>
		</label>
	);
}

const Field = ({ label, value = '' }: { label: string; value?: string }) => (
	<input type="text" aria-label={label} defaultValue={value} className="h-[11px] w-[25px] shrink-0 border border-[#b4b9be] bg-white px-px outline-none" />
);

function PropertyPanel() {
	return (
		<section className="flex border-t border-[#aab0b6] pl-[14px]">
			<div className="grid grid-cols-3 content-start gap-x-px bg-linear-to-b from-white to-[#eef0f2] px-px">
				<Tool icon="enter" label="Ввод" />
				<button type="button" aria-label="Прервать команду" className="flex h-3 items-center">
					<Svg><path d="M4 1H8L11 4V8L8 11H4L1 8V4Z" fill="#e0261c" /><path d="M2.500 6H9.500" stroke="#ffd0cc" strokeWidth="2" strokeDasharray="1 1.300" /></Svg>
				</button>
				<button type="button" aria-label="Автосоздание" className="flex h-3 items-center bg-[#fddc74] outline outline-[#e3c271]">
					<Svg><text x="0" y="5" fontSize="5.500" fontWeight="bold" fill="#222">Auto</text><path d="M10 6V9H2.500M4.500 7.200 2.500 9 4.500 10.800" stroke="#222" strokeWidth="1.300" /></Svg>
				</button>
				<Tool icon="camera" label="Запомнить состояние" />
				<Tool icon="torch" label="Свойства" />
				<Tool icon="helpDoc" label="Справка" />
			</div>
			<div className="min-w-0 flex-1">
				<form className="flex h-[18px] items-center gap-[2px] border-b border-l border-[#a6adb4] bg-linear-to-b from-white to-[#f1f3f5] pl-2">
					<div className="flex items-center gap-px">
						<Check label="Точка 1" letter="т1" checked />
						<Field label="X1" value="-39.763" />
						<Field label="Y1" value="-32.0" />
						<Check label="Точка 2" letter="т2" />
						<Field label="X2" />
						<Field label="Y2" />
					</div>
					<span className="flex h-[13px] items-center gap-px border border-[#7fbbd8] bg-[#fddc74]">
						<Check label="Длина" letter="Д">лина</Check>
						<Field label="Длина" />
					</span>
					<Check label="Угол" letter="У">гол</Check>
					<Field label="Угол" />
					<label htmlFor="line-style">Сти<u>л</u>ь</label>
					<span className="flex h-[11px] w-[101px] items-center border border-[#b4b9be] bg-white">
						<span className="grid h-full flex-1 items-center">
							<span className="col-start-1 row-start-1 mx-px h-px bg-[#3030f0]" />
							<select id="line-style" defaultValue="main" className="col-start-1 row-start-1 h-full appearance-none bg-transparent text-transparent outline-none">
								<option value="main" aria-label="Основная" />
							</select>
						</span>
						<span className="flex h-full w-2 items-center justify-center border border-[#a7acb1] bg-[#e8eaec]"><Caret /></span>
					</span>
				</form>
				<div role="tablist" className="flex h-[11px]">
					<button type="button" role="tab" aria-selected="true" className="flex items-center gap-px bg-white px-px">
						<Svg size="size-[10px]">
							<path d="M1.500 8.500 10 4" stroke="#555" />
							<circle cx="1.500" cy="8.500" r="1.300" fill="#2d49d2" />
							<circle cx="10" cy="4" r="1.300" fill="#2d49d2" />
						</Svg>
						Отрезок
					</button>
				</div>
			</div>
		</section>
	);
}

export default function App() {
	return (
		<div className="flex min-h-screen w-full overflow-hidden border-r border-white bg-[#e1e5e9] font-['Liberation_Sans',sans-serif] text-[6px] leading-[8px] text-[#3b4046]">
			<div className="w-1 shrink-0 bg-linear-to-r from-[#d8dde2] via-[#b3bac1] to-[#858d95]" />
			<div className="flex min-w-0 flex-1 flex-col">
				<MenuBar />
				<Toolbars />
				<div className="flex flex-1">
					<Rail />
					<TreePanel />
					<Viewport />
				</div>
				<div className="h-[3px]" />
				<PropertyPanel />
				<footer className="mt-[2px] h-3 border-t border-[#a6adb4] bg-linear-to-b from-[#d9dde1] to-[#c3c8ce] pt-px pl-[2px]">
					Укажите начальную точку отрезка или введите ее координаты
				</footer>
			</div>
		</div>
	);
}
